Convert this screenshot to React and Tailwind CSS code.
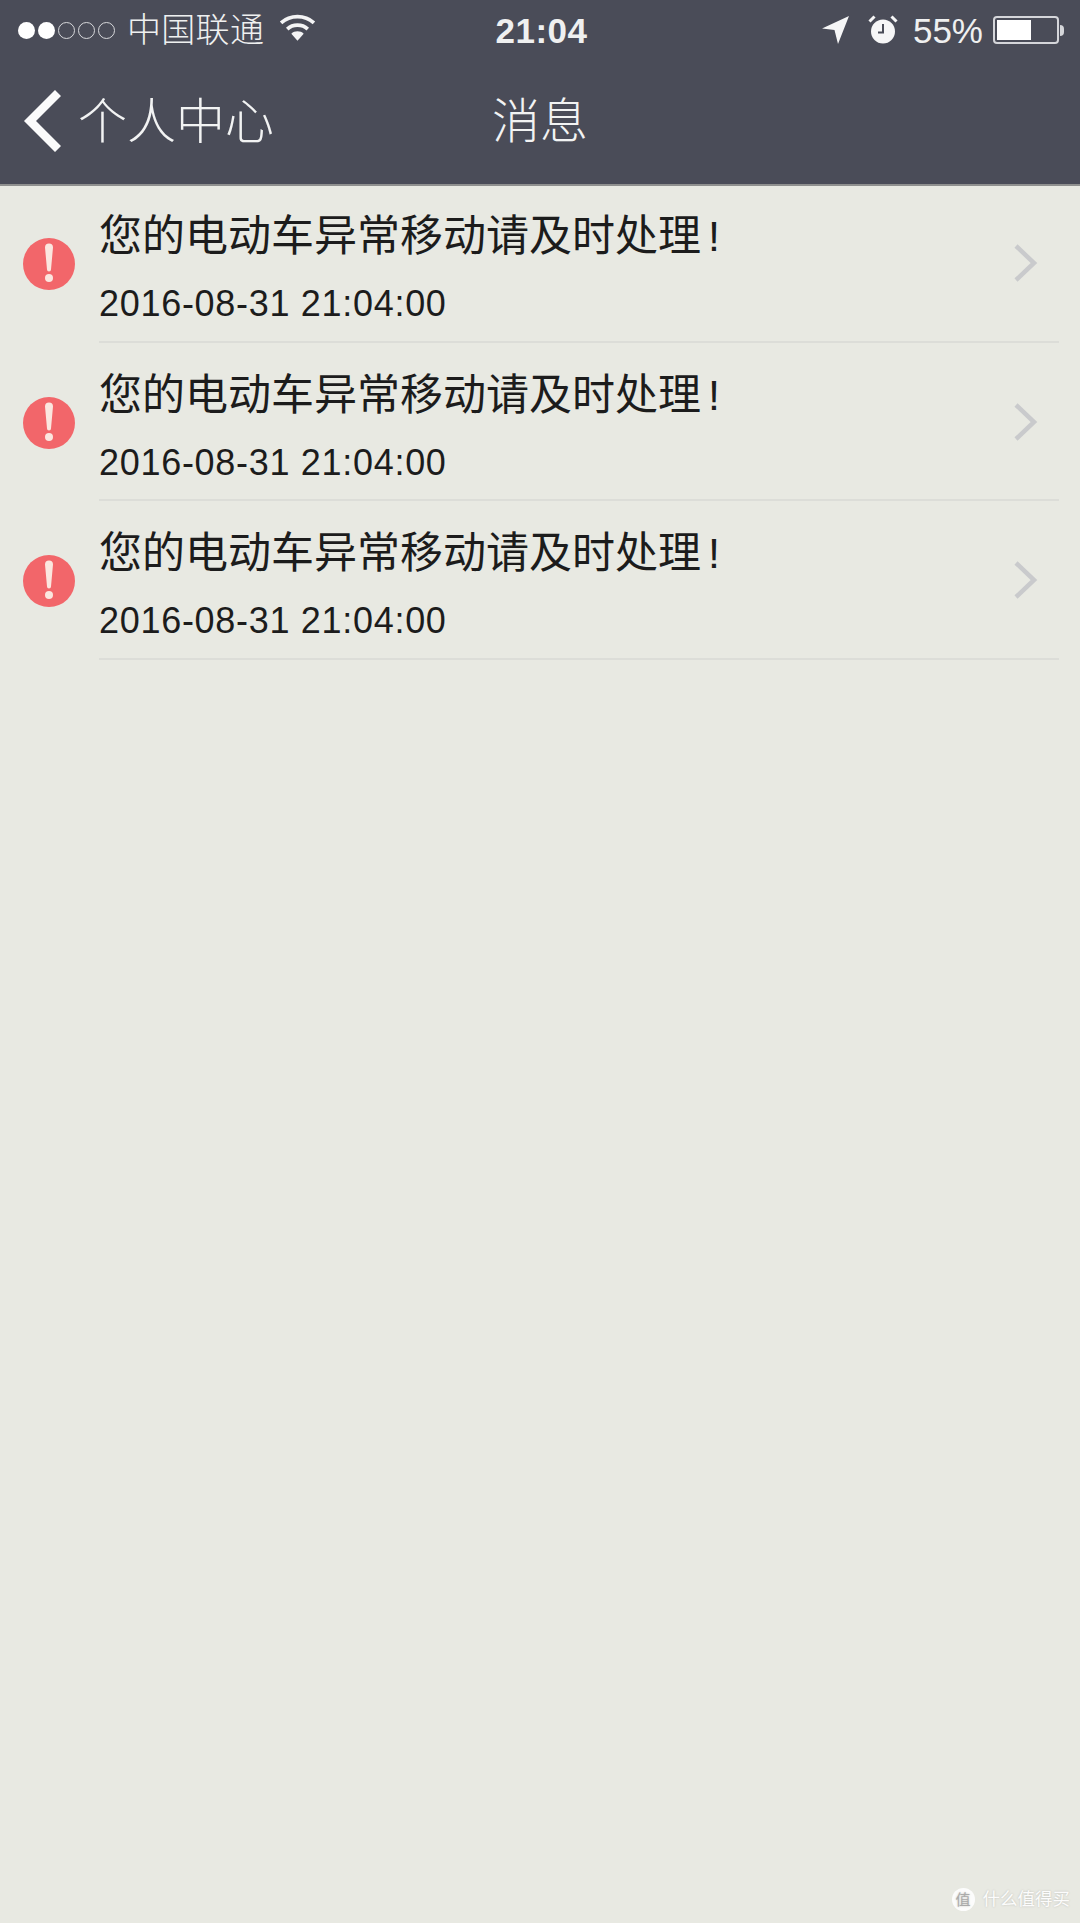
import React from 'react';

const font = { fontFamily: '"Liberation Sans", "Noto Sans CJK SC", sans-serif' };

const Dot = ({ on }) => (
  <span className={`block w-[17px] h-[17px] rounded-full ${on ? 'bg-white' : 'border border-[#d8d9dc]'}`} />
);

const StatusBar = () => (
  <div className="h-[60px] flex items-center justify-between text-[#eff0f0]">
    <div className="flex items-center">
      <div className="flex gap-[3px] ml-[18px]">
        <Dot on /><Dot on /><Dot /><Dot /><Dot />
      </div>
      <span className="ml-[12px] text-[34px] tracking-[0.3px] leading-none font-light">中国联通</span>
      <svg className="ml-[15px] mb-[6px]" width="37" height="29" viewBox="0 0 36 28" fill="none" stroke="#f4f4f5" strokeWidth="3.6">
        <path d="M2 9.5C11 1.500 25 1.500 34 9.5" />
        <path d="M8 15.5C13.5 10.5 22.5 10.5 28 15.5" />
        <path d="M18 27l-6-7c3-3 9-3 12 0z" fill="#f4f4f5" stroke="none" />
      </svg>
    </div>
    <span className="absolute left-0 right-0 pl-[3px] text-center text-[35px] font-bold leading-none pointer-events-none tracking-[0.5px]">21:04</span>
    <div className="flex items-center">
      <svg width="28" height="30" viewBox="0 0 28 30">
        <path d="M28 1L17 29l-3.500-14L1 13.500z" fill="#f6f6f7" />
      </svg>
      <svg className="ml-[19px]" width="30" height="30" viewBox="0 0 30 30">
        <circle cx="15" cy="16.5" r="12" fill="#f6f6f7" />
        <path d="M15 9v8.500h-5" fill="none" stroke="#4a4c58" strokeWidth="2" />
        <path d="M1.500 6.500L6.500 1.500M28.500 6.500L23.500 1.500" stroke="#f6f6f7" strokeWidth="3" />
      </svg>
      <span className="ml-[15px] text-[35px] leading-none">55%</span>
      <div className="ml-[10px] w-[66px] h-[28px] border-2 border-[#d5d6da] rounded-[4px] p-[2px]">
        <div className="w-[34px] h-full bg-white" />
      </div>
      <div className="ml-[1px] mr-[16px] w-[4px] h-[11px] bg-[#d5d6da] rounded-r-full" />
    </div>
  </div>
);

const NavBar = () => (
  <div className="h-[124px] relative flex items-center justify-center text-[#f2f3f3]">
    <div className="absolute left-0 top-0 h-full flex items-center">
      <svg className="ml-[23px] mb-[3px]" width="38" height="62" viewBox="0 0 38 62" fill="none" stroke="#fbfbfb" strokeWidth="8.5">
        <path d="M35 3L7 31l28 28" />
      </svg>
      <span className="ml-[17px] text-[49px] leading-none font-light">个人中心</span>
    </div>
    <span className="text-[48px] leading-none font-light">消息</span>
  </div>
);

const MessageRow = () => (
  <div className="h-[158.5px] flex items-center">
    <div className="w-[99px] shrink-0 flex pl-[23px] mt-[2px]">
      <svg width="52" height="52" viewBox="0 0 52 52">
        <circle cx="26" cy="26" r="26" fill="#f2666a" />
        <path d="M22 9.500a4 4 0 0 1 8 0L28 31.500a2 2 0 0 1-4 0z" fill="#fbe6df" />
        <circle cx="26" cy="40" r="4" fill="#fbe6df" />
      </svg>
    </div>
    <div className="flex-1 h-full mr-[21px] border-b-2 border-[#dcddd8] flex items-center pr-[20px]">
      <div className="flex-1 text-[#1c1c1c] pt-[11px]">
        <div className="text-[43px] leading-[50px]">
          您的电动车异常移动请及时处理<span className="ml-[7px]">!</span>
        </div>
        <div className="text-[36px] leading-[40px] mt-[23px] tracking-[0.7px]">2016-08-31 21:04:00</div>
      </div>
      <svg width="26" height="40" viewBox="0 0 26 40" fill="none" stroke="#c9cacc" strokeWidth="4.500" className="mt-[2px]">
        <path d="M3 3l18 17L3 37" />
      </svg>
    </div>
  </div>
);

const Watermark = () => (
  <div className="absolute right-[10px] bottom-[12px] flex items-center text-white opacity-90 [text-shadow:0_0_2px_#b5b5b0]">
    <div className="w-[23px] h-[23px] rounded-full bg-white flex items-center justify-center text-[15px] leading-none text-[#a5a5a5]">值</div>
    <span className="ml-[8px] text-[17.500px] leading-none">什么值得买</span>
  </div>
);

const App = () => (
  <div className="relative w-[1080px] h-[1923px] bg-[#e8e9e2] overflow-hidden" style={font}>
    <div className="bg-[#4a4c58] shadow-[0_2px_0_#8f908f]">
      <StatusBar />
      <NavBar />
    </div>
    <MessageRow />
    <MessageRow />
    <MessageRow />
    <Watermark />
  </div>
);

export default App;
